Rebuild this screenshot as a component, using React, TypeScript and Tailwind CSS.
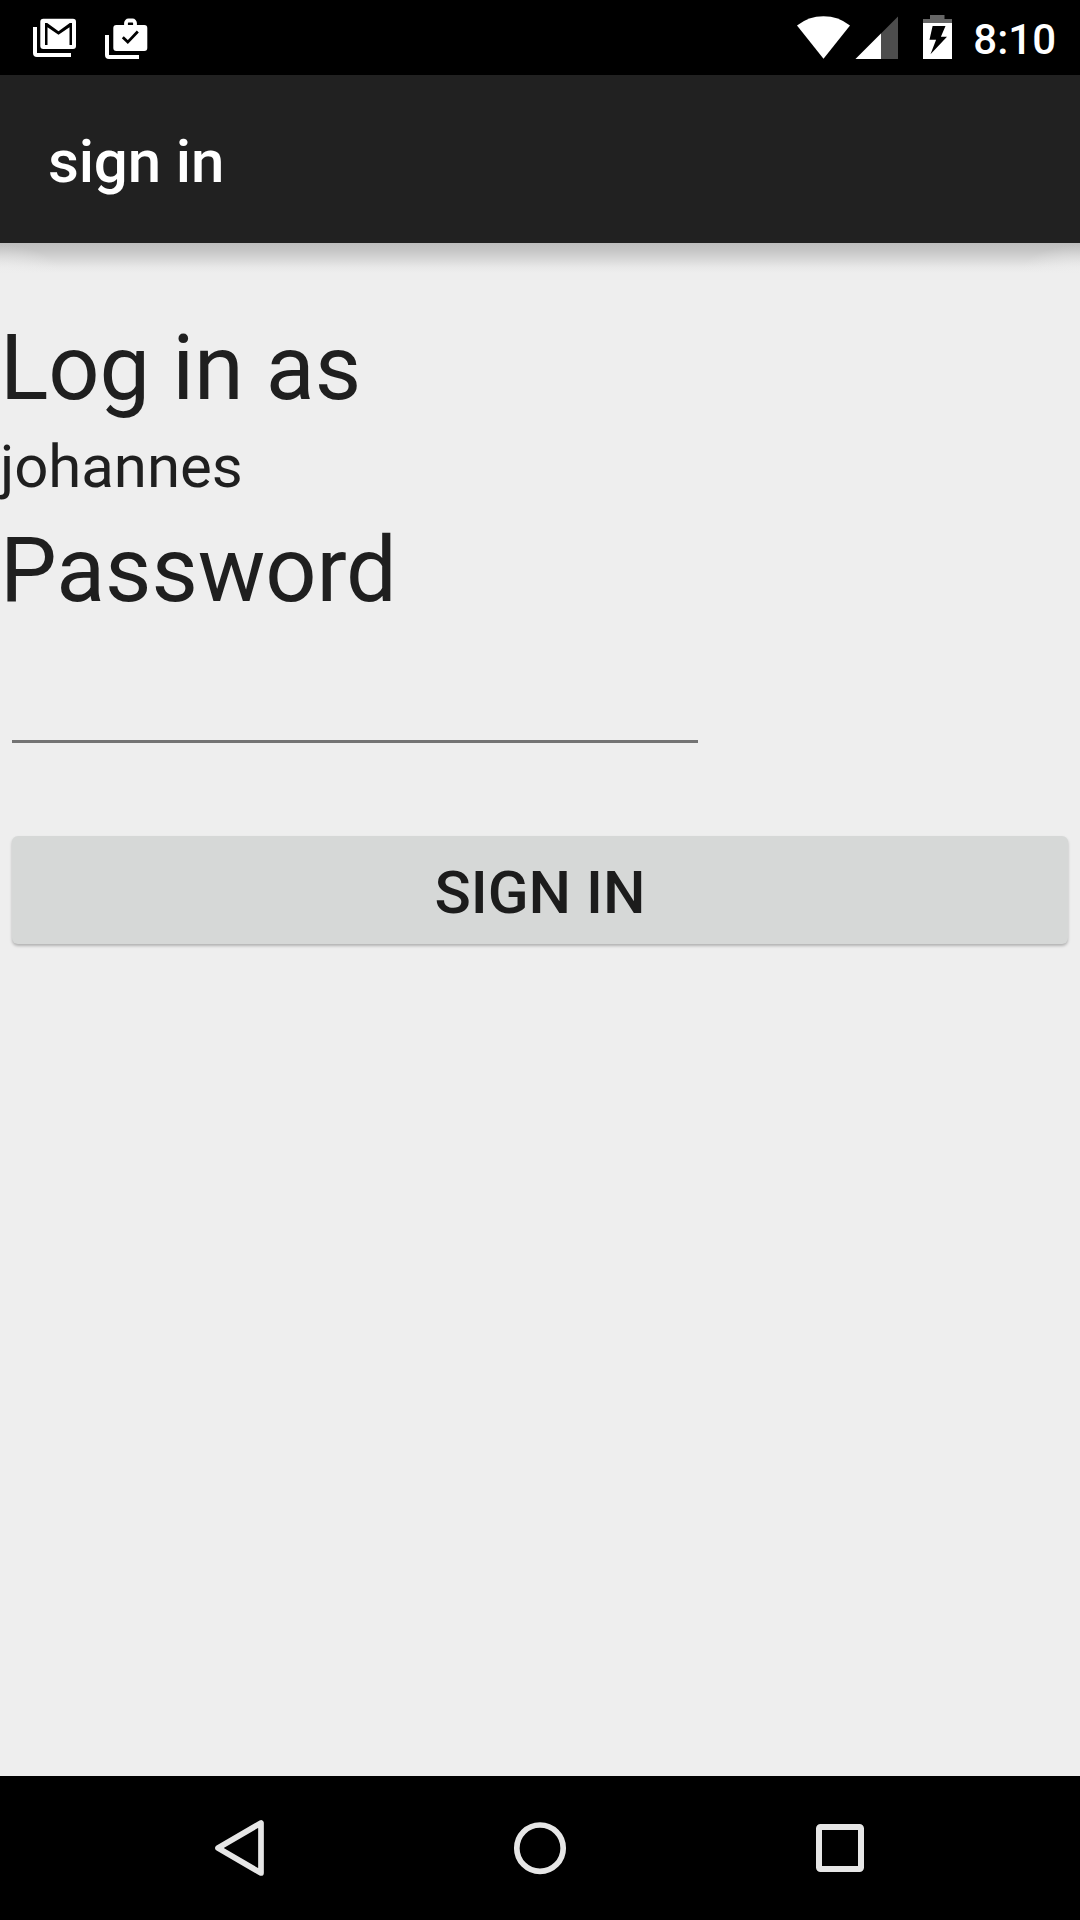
function MailIcon() {
  return (
    <svg className="block h-[75px] w-[52px]" viewBox="28 0 52 75">
      <path d="M35 27v26a2 2 0 0 0 2 2h34" fill="none" stroke="#fff" strokeWidth="4" />
      <rect x="40.3" y="18.7" width="35.7" height="30.3" rx="3" fill="#fff" />
      <path d="M45 45V23h2.2l11.3 8.3L69.8 23H72v22h-2.5V27.3l-11 7.5-11-7.5V45z" fill="#000" />
    </svg>
  );
}

function WorkIcon() {
  return (
    <svg className="block h-[75px] w-[52px]" viewBox="100 0 52 75">
      <path d="M107 35v20a2 2 0 0 0 2 2h30" fill="none" stroke="#fff" strokeWidth="4" />
      <rect x="113.3" y="25" width="34" height="26" rx="3" fill="#fff" />
      <path d="M126 26v-3a2.5 2.5 0 0 1 2.5-2.5h4a2.5 2.5 0 0 1 2.5 2.5v3" fill="none" stroke="#fff" strokeWidth="3.8" />
      <path d="M122.8 37.3l5 4.8 10-10.6" fill="none" stroke="#000" strokeWidth="2.8" />
    </svg>
  );
}

function SystemIcons() {
  return (
    <svg className="block h-[75px] w-[160px]" viewBox="795 0 160 75">
      <path d="M823.5 58.7L797 25.5Q808.5 16.2 823.5 16.2T850 25.5z" fill="#fff" />
      <path d="M898 16.5V59H855.5z" fill="#4d4d4d" />
      <path d="M881 33.5V59H855.5z" fill="#fff" />
      <path d="M930 15h14.500v4H952v4h-29v-4h7z" fill="#666" />
      <path d="M923 23h29v36h-29z" fill="#fff" />
      <path d="M932.6 26h12.900l-4.600 10.700h6.100l-16.500 17.600 5.600-14.600h-6.600z" fill="#000" />
    </svg>
  );
}

function StatusBar() {
  return (
    <header className="flex h-[75px] shrink-0 items-center justify-between bg-black pr-6 pl-7">
      <div className="flex gap-5">
        <MailIcon />
        <WorkIcon />
      </div>
      <div className="flex items-center gap-[18px] text-white">
        <SystemIcons />
        <span className="pt-[5px] text-[42px] leading-[50px] font-medium">8:10</span>
      </div>
    </header>
  );
}

function NavBar() {
  return (
    <nav className="flex h-36 shrink-0 items-center justify-between bg-black px-[210px]">
      <svg className="h-[60px] w-[60px]" viewBox="210 1818 60 60" fill="none" stroke="#e6e6e6" strokeWidth="5.7" strokeLinejoin="round">
        <path d="M218 1848l43-25v50z" />
      </svg>
      <svg className="h-[60px] w-[60px]" viewBox="510 1818 60 60" fill="none" stroke="#e6e6e6" strokeWidth="5.7">
        <circle cx="540" cy="1848.2" r="23.2" />
      </svg>
      <svg className="h-[60px] w-[60px]" viewBox="810 1818 60 60" fill="none" stroke="#e6e6e6" strokeWidth="6">
        <rect x="819" y="1827" width="42" height="42" rx="1.5" />
      </svg>
    </nav>
  );
}

export default function App() {
  return (
    <div className="flex h-[1920px] w-[1080px] flex-col overflow-hidden bg-[#eeeeee] font-['Roboto',sans-serif] text-[#1f1f1f]">
      <StatusBar />
      <div className="relative flex h-[168px] shrink-0 items-center bg-[#212121] pl-12">
        <h1 className="pt-[5px] text-[60px] leading-[70px] font-medium tracking-[-0.15px] text-white">sign in</h1>
        <div className="absolute top-full left-0 h-[30px] w-full bg-[linear-gradient(180deg,#bebebe,#c6c6c6_25%,#d8d8d8_55%,#e8e8e8_80%,#eeeeee)]">
          <div className="h-full w-full bg-[radial-gradient(60px_28px_at_0_100%,#eeeeeecc,#eeeeee00),radial-gradient(60px_28px_at_100%_100%,#eeeeeecc,#eeeeee00)]" />
        </div>
      </div>
      <main className="flex grow flex-col pt-[73px]">
        <h2 className="text-[90px] leading-[106px] tracking-[-0.1px]">Log in as</h2>
        <p className="mt-[10px] text-[60px] leading-[70px] tracking-[-0.1px]">johannes</p>
        <label htmlFor="password" className="mt-4 text-[90px] leading-[106px] tracking-[-0.1px]">Password</label>
        <input
          id="password"
          type="password"
          className="mt-4 ml-3 h-[103px] w-[686px] border-b-3 border-[#737373] text-[48px] outline-none"
        />
        <button
          type="button"
          className="mx-3 mt-[93px] h-[108px] rounded-[6px] bg-[#d6d8d7] pt-1.5 text-[60px] leading-[70px] font-medium text-[#1c1c1c] shadow-[0_2px_3px_rgba(0,0,0,0.25)]"
        >
          SIGN IN
        </button>
      </main>
      <NavBar />
    </div>
  );
}
